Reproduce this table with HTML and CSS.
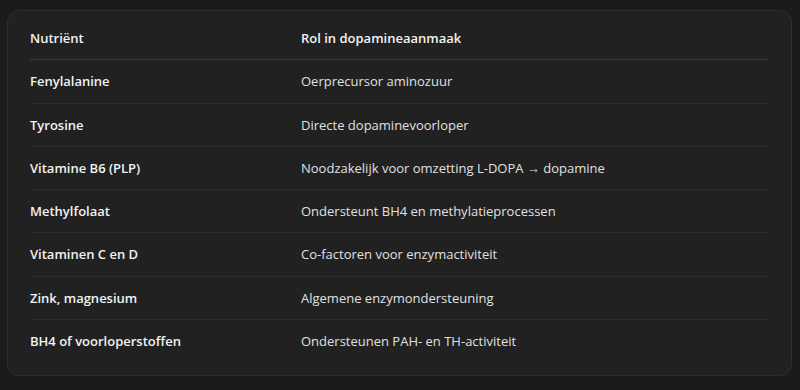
FILE: index.html
```html
<!DOCTYPE html>
<html lang="nl">
<head>
<meta charset="utf-8">
<title>Nutriënten</title>
<link rel="stylesheet" href="styles.css">
</head>
<body>
<div class="card">
  <table class="nutrients">
    <thead>
      <tr><th>Nutriënt</th><th>Rol in dopamineaanmaak</th></tr>
    </thead>
    <tbody>
      <tr><td class="name">Fenylalanine</td><td>Oerprecursor aminozuur</td></tr>
      <tr><td class="name">Tyrosine</td><td>Directe dopaminevoorloper</td></tr>
      <tr><td class="name">Vitamine B6 (PLP)</td><td>Noodzakelijk voor omzetting L-DOPA → dopamine</td></tr>
      <tr><td class="name">Methylfolaat</td><td>Ondersteunt BH4 en methylatieprocessen</td></tr>
      <tr><td class="name">Vitaminen C en D</td><td>Co-factoren voor enzymactiviteit</td></tr>
      <tr><td class="name">Zink, magnesium</td><td>Algemene enzymondersteuning</td></tr>
      <tr><td class="name">BH4 of voorloperstoffen</td><td>Ondersteunen PAH- en TH-activiteit</td></tr>
    </tbody>
  </table>
</div>
</body>
</html>
```
FILE: styles.css
```css
html, body {
  margin: 0;
  padding: 0;
  background: #1b1b1b;
}
body {
  padding: 10px 8px 14px 7px;
  font-family: "Open Sans", "Noto Sans", sans-serif;
  font-size: 13px;
  color: #e8e8e8;
}
.card {
  background: #212121;
  border: 1px solid #2e2e2e;
  border-radius: 12px;
  padding: 6px 22px 13px 22px;
  height: 366px;
  box-sizing: border-box;
}
.nutrients {
  width: 100%;
  border-collapse: collapse;
}
.nutrients th,
.nutrients td {
  text-align: left;
  padding: 12px 0;
  line-height: 18.3px;
  vertical-align: middle;
}
.nutrients th:first-child,
.nutrients td:first-child {
  width: 271px;
}
.nutrients th {
  font-weight: 600;
  color: #f2f2f2;
  border-bottom: 1px solid #3a3a3a;
}
.nutrients td {
  border-bottom: 1px solid #2b2b2b;
  color: #e0e0e0;
}
.nutrients td.name {
  font-weight: 600;
  color: #f2f2f2;
}
.nutrients tbody tr:last-child td {
  border-bottom: none;
}
```
